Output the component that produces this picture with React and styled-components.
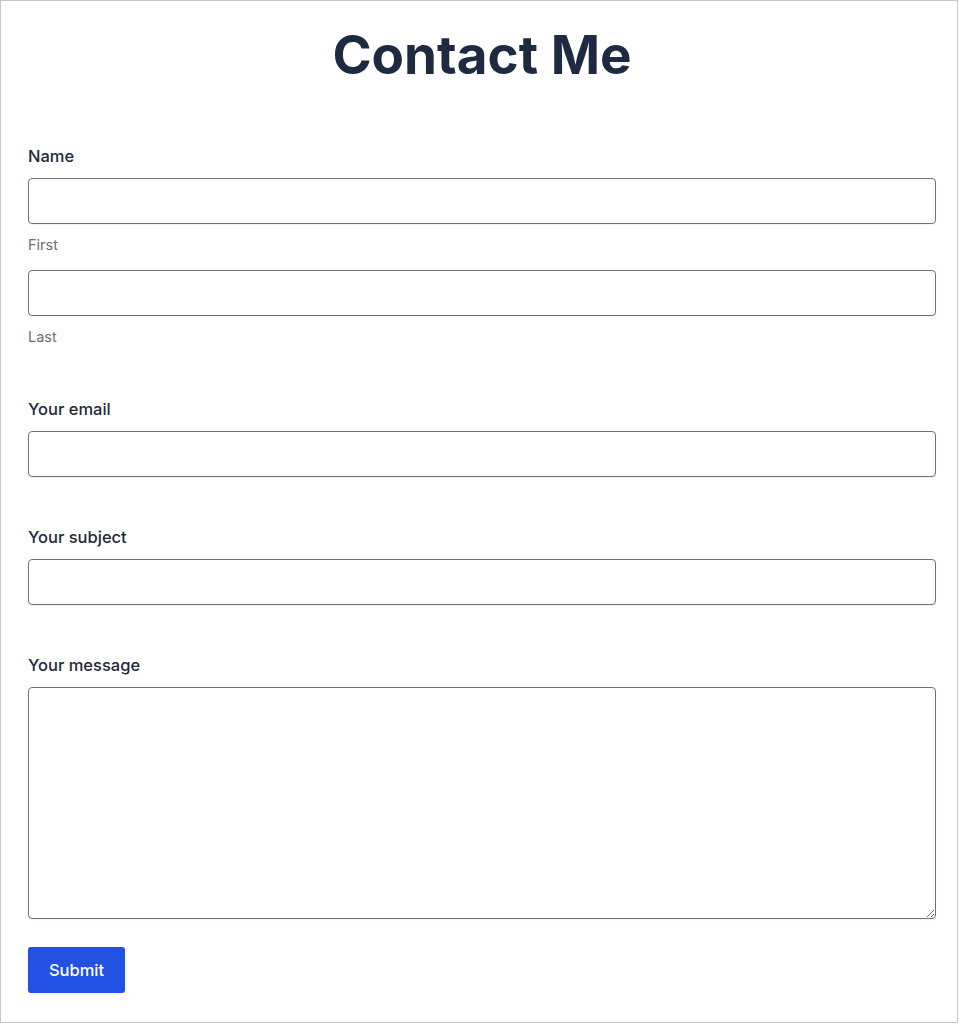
import React from "react";
import styled, { createGlobalStyle } from "styled-components";

const Global = createGlobalStyle`
  html, body { margin: 0; padding: 0; background: #ffffff; }
  body { font-family: Inter, "Noto Sans", "Liberation Sans", sans-serif; }
  * { box-sizing: border-box; }
`;

const Frame = styled.div`
  width: 958px;
  height: 1023px;
  border: 1px solid #c6c6c6;
  padding: 0 21px 0 27px;
  background: #ffffff;
`;

const Title = styled.h1`
  margin: 0;
  padding-top: 22px;
  font-family: Inter, "Liberation Sans", sans-serif;
  font-size: 53px;
  font-weight: 700;
  line-height: 64px;
  letter-spacing: 0;
  color: #1c2b3f;
  text-align: center;
`;

const Form = styled.form`
  display: flex;
  flex-direction: column;
  gap: 48px;
  margin-top: 57px;
`;

const Group = styled.div`
  display: flex;
  flex-direction: column;
`;

const Label = styled.label`
  font-size: 16.5px;
  font-weight: 500;
  line-height: 24px;
  color: #1e293b;
  margin-bottom: 10px;
`;

const Field = styled.input`
  display: block;
  width: 100%;
  height: 46px;
  border: 1px solid #6b7280;
  border-radius: 4px;
  background: #ffffff;
  box-shadow: 0 1px 2px rgba(0, 0, 0, 0.06);
  font: inherit;
  padding: 0 12px;
  outline: none;
`;

const Area = styled.textarea`
  display: block;
  width: 100%;
  height: 232px;
  border: 1px solid #6b7280;
  border-radius: 4px;
  background: #ffffff;
  box-shadow: 0 1px 2px rgba(0, 0, 0, 0.06);
  font: inherit;
  padding: 12px;
  outline: none;
`;

const SubLabel = styled.span`
  display: block;
  font-size: 14.5px;
  line-height: 20px;
  color: #6b7075;
  margin-top: 11px;
  margin-bottom: ${(p) => (p.$last ? "2px" : "15px")};
`;

const Submit = styled.button`
  align-self: flex-start;
  margin-top: -20px;
  width: 97px;
  height: 46px;
  border: none;
  border-radius: 3px;
  background: #2251e4;
  color: #ffffff;
  font-family: inherit;
  font-size: 16.5px;
  font-weight: 500;
  box-shadow: 0 1px 3px rgba(0, 0, 0, 0.08);
  cursor: pointer;
`;

export default function App() {
  return (
    <>
      <Global />
      <Frame>
        <Title>Contact Me</Title>
        <Form onSubmit={(e) => e.preventDefault()}>
          <Group>
            <Label>Name</Label>
            <Field type="text" />
            <SubLabel>First</SubLabel>
            <Field type="text" />
            <SubLabel $last>Last</SubLabel>
          </Group>
          <Group>
            <Label>Your email</Label>
            <Field type="email" />
          </Group>
          <Group>
            <Label>Your subject</Label>
            <Field type="text" />
          </Group>
          <Group>
            <Label>Your message</Label>
            <Area />
          </Group>
          <Submit type="submit">Submit</Submit>
        </Form>
      </Frame>
    </>
  );
}
